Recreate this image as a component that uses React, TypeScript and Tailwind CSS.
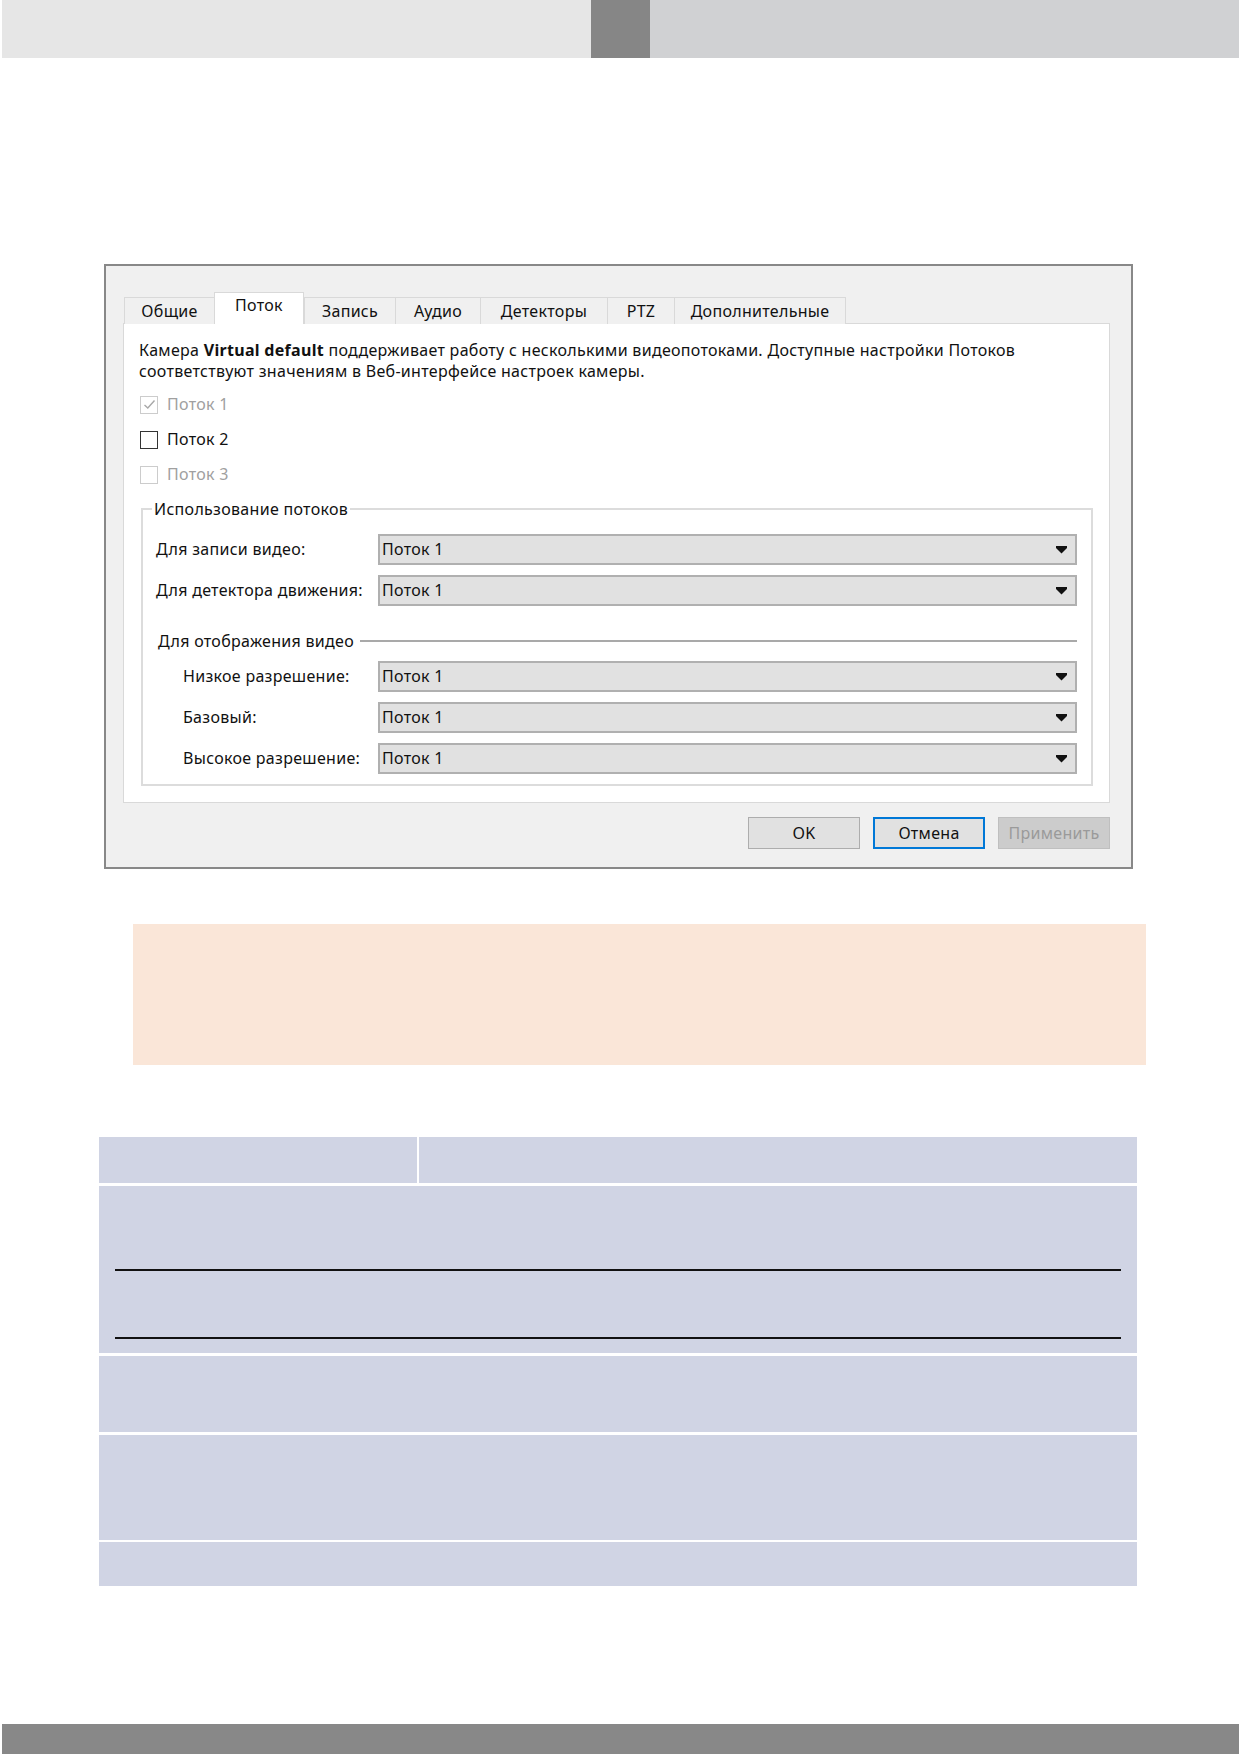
import { useState } from 'react';

const tabs = [
  { id: 'general', label: 'Общие', w: 'w-[90px]' },
  { id: 'stream', label: 'Поток', w: 'w-[90px]' },
  { id: 'record', label: 'Запись', w: 'w-[91px]' },
  { id: 'audio', label: 'Аудио', w: 'w-[85px]' },
  { id: 'detectors', label: 'Детекторы', w: 'w-[127px]' },
  { id: 'ptz', label: 'PTZ', w: 'w-[67px]' },
  { id: 'extra', label: 'Дополнительные', w: 'w-[172px]' },
];

function Checkbox({ label, checked, disabled }: { label: string; checked?: boolean; disabled?: boolean }) {
  return (
    <label className={`flex items-center h-[35px] gap-[9px] ${disabled ? 'text-[#a0a0a0]' : 'text-[#111]'}`}>
      <span
        className={`ml-px w-[18px] h-[18px] flex items-center justify-center bg-white border ${
          disabled ? 'border-[#cccccc]' : 'border-[#333] border-[1.5px]'
        }`}
      >
        {checked && (
          <svg width="13" height="11" viewBox="0 0 13 11">
            <polyline points="1.5,6 4.8,9 11.5,1.5" fill="none" stroke="#a8a8a8" strokeWidth="1.4" />
          </svg>
        )}
      </span>
      <span>{label}</span>
    </label>
  );
}

function Combo({ value }: { value: string }) {
  return (
    <div className="flex-1 h-[31px] flex items-center justify-between bg-[#e1e1e1] border-2 border-[#b0b0b0] pl-[2px] pr-[8px] text-[#111]">
      <span>{value}</span>
      <svg width="11" height="8" viewBox="0 0 11 8">
        <polygon points="0,0 11,0 11,2 5.5,7.5 0,2" fill="#111" />
      </svg>
    </div>
  );
}

function ComboRow({ label, indent }: { label: string; indent?: boolean }) {
  return (
    <div className="flex items-center">
      <span className={`w-[222px] shrink-0 ${indent ? 'pl-[27px]' : ''}`}>{label}</span>
      <Combo value="Поток 1" />
    </div>
  );
}

export default function App() {
  const [active, setActive] = useState('stream');

  return (
    <div className="w-[1239px] h-[1754px] bg-white flex flex-col font-['Segoe_UI','Noto_Sans',sans-serif] text-[16px] tracking-[0.3px] leading-[21px]">
      {/* page header strip */}
      <div className="flex h-[58px] pl-[2px] shrink-0">
        <div className="w-[589px] bg-[#e6e6e6]" />
        <div className="w-[59px] bg-[#868686]" />
        <div className="flex-1 bg-[#d0d1d3]" />
      </div>

      {/* camera settings dialog */}
      <div className="ml-[104px] mt-[206px] w-[1029px] h-[605px] shrink-0 border-2 border-[#888] bg-[#f0f0f0] pt-[26px] pl-[17px] pr-[21px]">
        <div className="flex items-end ml-[1px] -mb-px relative z-10">
          {tabs.map((t, i) => {
            const isActive = t.id === active;
            return (
              <button
                key={t.id}
                onClick={() => setActive(t.id)}
                className={`${t.w} flex items-center justify-center border-t border-l border-[#d9d9d9] ${
                  i === tabs.length - 1 || isActive ? 'border-r' : ''
                } ${isActive ? 'h-[32px] bg-white pb-[6px]' : 'h-[27px] bg-[#f0f0f0]'} text-[#111]`}
              >
                {t.label}
              </button>
            );
          })}
        </div>

        <div className="h-[480px] bg-white border border-[#d9d9d9] pt-[16px] pl-[15px] text-[#111]">
          <p>
            Камера <b>Virtual default</b> поддерживает работу с несколькими видеопотоками. Доступные настройки Потоков
            <br />
            соответствуют значениям в Веб-интерфейсе настроек камеры.
          </p>

          <div className="mt-[5px] flex flex-col">
            <Checkbox label="Поток 1" checked disabled />
            <Checkbox label="Поток 2" />
            <Checkbox label="Поток 3" disabled />
          </div>

          <fieldset className="mt-[7px] ml-[2px] w-[952px] border-2 border-[#dcdcdc] pl-[13px] pr-[14px] pt-[15px] pb-[10px]">
            <legend className="-ml-[4px] px-[2px] h-[20px] leading-[20px]">Использование потоков</legend>
            <div className="flex flex-col gap-[10px]">
              <ComboRow label="Для записи видео:" />
              <ComboRow label="Для детектора движения:" />
            </div>
            <div className="mt-[25px] h-[20px] flex items-center gap-[6px] ml-[2px]">
              <span>Для отображения видео</span>
              <div className="flex-1 h-[2px] bg-[#a9a9a9]" />
            </div>
            <div className="mt-[10px] flex flex-col gap-[10px]">
              <ComboRow label="Низкое разрешение:" indent />
              <ComboRow label="Базовый:" indent />
              <ComboRow label="Высокое разрешение:" indent />
            </div>
          </fieldset>
        </div>

        <div className="mt-[14px] flex justify-end gap-[13px]">
          <button className="w-[112px] h-[32px] bg-[#e1e1e1] border border-[#adadad] text-[#111]">OK</button>
          <button className="w-[112px] h-[32px] bg-[#e1e1e1] border-2 border-[#0078d7] text-[#111]">Отмена</button>
          <button className="w-[112px] h-[32px] bg-[#cccccc] border border-[#bfbfbf] text-[#9a9a9a]">Применить</button>
        </div>
      </div>

      {/* note block */}
      <div className="ml-[133px] mt-[55px] w-[1013px] h-[141px] shrink-0 bg-[#fae6d8]" />

      {/* parameters table */}
      <div className="ml-[99px] mt-[72px] w-[1038px] flex flex-col shrink-0">
        <div className="flex h-[46px] gap-[2px]">
          <div className="w-[318px] bg-[#d0d4e4]" />
          <div className="flex-1 bg-[#d0d4e4]" />
        </div>
        <div className="mt-[3px] h-[167px] bg-[#d0d4e4] px-[16px] pt-[83px]">
          <div className="h-[2px] bg-[#111]" />
          <div className="mt-[66px] h-[2px] bg-[#111]" />
        </div>
        <div className="mt-[3px] h-[76px] bg-[#d0d4e4]" />
        <div className="mt-[3px] h-[105px] bg-[#d0d4e4]" />
        <div className="mt-[2px] h-[44px] bg-[#d0d4e4]" />
      </div>

      <div className="flex-1" />

      {/* page footer strip */}
      <div className="h-[30px] ml-[2px] bg-[#888888] shrink-0" />
    </div>
  );
}
